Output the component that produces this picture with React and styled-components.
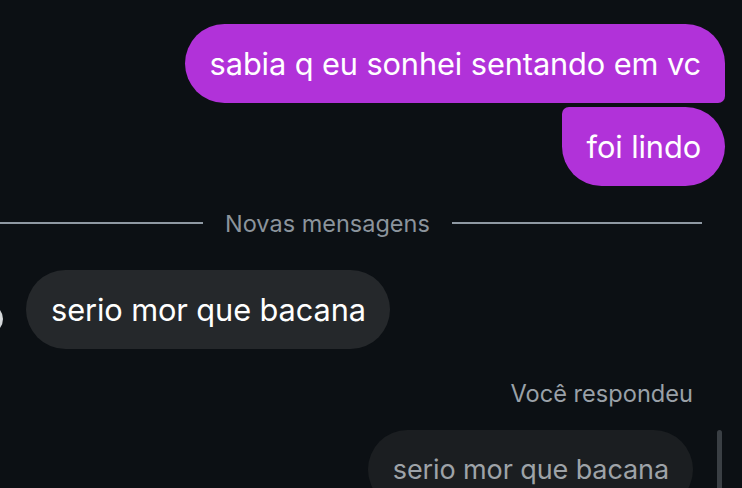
import React from 'react'
import styled, { createGlobalStyle } from 'styled-components'

const Global = createGlobalStyle`
  html, body {
    margin: 0;
    padding: 0;
    background: #0c1014;
    overflow: hidden;
  }
  body {
    font-family: Inter, "Noto Sans", "Liberation Sans", sans-serif;
    -webkit-font-smoothing: antialiased;
  }
`

const Thread = styled.div`
  width: 742px;
  height: 488px;
  display: flex;
  flex-direction: column;
  padding-top: 24px;
  box-sizing: border-box;
  overflow: hidden;
`

const OutGroup = styled.div`
  display: flex;
  flex-direction: column;
  align-items: flex-end;
  gap: 4px;
  padding-right: 17px;
`

const radii = {
  first: '40px 40px 7px 40px',
  last: '7px 40px 40px 40px',
  single: '40px',
}

const Bubble = styled.div`
  box-sizing: border-box;
  height: 79px;
  display: flex;
  align-items: center;
  padding: 0 24px 0 25px;
  font-size: ${p => p.$size || 30.75}px;
  letter-spacing: -0.1px;
  white-space: nowrap;
  border-radius: ${p => radii[p.$shape || 'single']};
  background: ${p => p.$bg};
  color: ${p => p.$color};
`

const Divider = styled.div`
  display: flex;
  align-items: center;
  gap: 22px;
  padding-right: 40px;
  margin-top: 24px;
  height: 26px;
`

const Line = styled.div`
  height: 2px;
  background: #8f99a3;
  flex: ${p => p.$grow};
`

const DividerLabel = styled.span`
  color: #8b949c;
  font-size: 23.5px;
  white-space: nowrap;
`

const InRow = styled.div`
  display: flex;
  align-items: flex-end;
  gap: 23px;
  margin-top: 34px;
  margin-left: -27px;
`

const Avatar = styled.div`
  width: 30px;
  height: 30px;
  border-radius: 50%;
  background: radial-gradient(circle at 70% 50%, #f2f3f4 0%, #b9bdc1 60%, #5a5f64 100%);
  margin-bottom: 15px;
  flex-shrink: 0;
`

const ReplyLabel = styled.div`
  align-self: flex-end;
  margin-right: 49px;
  margin-top: 30px;
  color: #9aa1a8;
  font-size: 23.6px;
`

const ReplyRow = styled.div`
  display: flex;
  justify-content: flex-end;
  align-items: flex-start;
  gap: 24px;
  margin-top: 22px;
  padding-right: 20px;
`

const Scrollbar = styled.div`
  width: 5px;
  height: 70px;
  border-radius: 3px;
  background: #3a3f44;
`

export default function App() {
  return (
    <>
      <Global />
      <Thread>
        <OutGroup>
          <Bubble $shape="first" $bg="#b132d9" $color="#ffffff">sabia q eu sonhei sentando em vc</Bubble>
          <Bubble $shape="last" $bg="#b132d9" $color="#ffffff">foi lindo</Bubble>
        </OutGroup>
        <Divider>
          <Line $grow="0 0 203px" />
          <DividerLabel>Novas mensagens</DividerLabel>
          <Line $grow="1" />
        </Divider>
        <InRow>
          <Avatar />
          <Bubble $bg="#25282b" $color="#ffffff">serio mor que bacana</Bubble>
        </InRow>
        <ReplyLabel>Você respondeu</ReplyLabel>
        <ReplyRow>
          <Bubble $bg="#1b1e21" $color="#9ea3a8" $size={27}>serio mor que bacana</Bubble>
          <Scrollbar />
        </ReplyRow>
      </Thread>
    </>
  )
}
